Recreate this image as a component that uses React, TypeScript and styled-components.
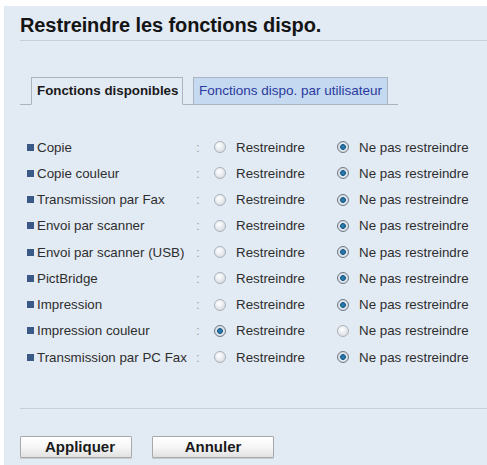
import React from "react";
import styled, { createGlobalStyle } from "styled-components";

const GlobalStyle = createGlobalStyle`
  html, body { margin: 0; padding: 0; background: #ffffff; }
  body { font-family: "Liberation Sans", Arial, sans-serif; }
  * { box-sizing: border-box; }
`;

const Panel = styled.div`
  margin: 6px 0 0 4px;
  min-height: 459px;
  background: #e2eaf4;
  padding: 0 0 0 16px;
  overflow: hidden;
`;

const Title = styled.h1`
  margin: 0;
  padding: 7px 0 3px;
  font-size: 20px;
  line-height: 24px;
  font-weight: bold;
  color: #141414;
  border-bottom: 1px solid #c7ced7;
  letter-spacing: -0.1px;
`;

const TabBar = styled.div`
  margin-top: 36px;
  width: 378px;
  display: flex;
  align-items: flex-end;
  padding-left: 11px;
  border-bottom: 1px solid #a9b4c0;
`;

const Tab = styled.div<{ $active?: boolean }>`
  height: 28px;
  margin-bottom: -1px;
  margin-left: ${(p) => (p.$active ? "0" : "10px")};
  width: ${(p) => (p.$active ? "152px" : "195px")};
  border: 1px solid #a9b4c0;
  border-bottom: 1px solid ${(p) => (p.$active ? "#e2eaf4" : "#a9b4c0")};
  background: ${(p) => (p.$active ? "#e2eaf4" : "#c5d9f0")};
  font-size: ${(p) => (p.$active ? "13.33px" : "13.5px")};
  font-weight: ${(p) => (p.$active ? "bold" : "normal")};
  color: ${(p) => (p.$active ? "#1a1a1a" : "#2b3a9e")};
  line-height: 26px;
  padding-left: 5px;
  white-space: nowrap;
`;

const RowList = styled.div`
  margin-top: 29px;
  display: flex;
  flex-direction: column;
`;

const Row = styled.div`
  height: 26.25px;
  display: grid;
  grid-template-columns: 175px 18px 123px auto;
  align-items: center;
  font-size: 13.33px;
  color: #2e2e2e;
  white-space: nowrap;
`;

const Label = styled.div`
  display: flex;
  align-items: center;
  gap: 3px;
  padding-left: 7px;
`;

const Bullet = styled.span`
  width: 7px;
  height: 7px;
  background: #3b5986;
  flex: none;
`;

const Colon = styled.span`
  padding-left: 1px;
  color: #9aa3ad;
`;

const Option = styled.label`
  display: inline-flex;
  align-items: center;
  gap: 10px;
`;

const Radio = styled.span<{ $checked?: boolean }>`
  margin-left: 1px;
  width: 12px;
  height: 12px;
  border-radius: 50%;
  flex: none;
  border: 1px solid ${(p) => (p.$checked ? "#6c7a88" : "#abb1b8")};
  background: ${(p) =>
    p.$checked
      ? "radial-gradient(circle at 50% 50%, #2f86b8 0, #1c5f8c 2.6px, #e4e8ec 3.2px, #c9ced4 100%)"
      : "radial-gradient(circle at 40% 35%, #ffffff 0, #eceef1 40%, #cdd2d8 100%)"};
`;

const Separator = styled.div`
  margin-top: 38px;
  border-top: 1px solid #c7ced7;
`;

const Buttons = styled.div`
  margin-top: 27px;
  display: flex;
  gap: 20px;
`;

const Button = styled.button<{ $w: number; $pad?: number }>`
  width: ${(p) => p.$w}px;
  height: 22px;
  padding: 0 0 0 ${(p) => p.$pad ?? 0}px;
  border: 1px solid #a7a9ac;
  border-radius: 1px;
  background: linear-gradient(#ffffff 0%, #f6f6f6 50%, #e1e1e1 100%);
  box-shadow: 0 1px 0 #c9cdd2;
  font-family: "Liberation Sans", Arial, sans-serif;
  font-size: 15px;
  font-weight: bold;
  color: #1a1a1a;
  line-height: 20px;
`;

const rows: [string, boolean][] = [
  ["Copie", false],
  ["Copie couleur", false],
  ["Transmission par Fax", false],
  ["Envoi par scanner", false],
  ["Envoi par scanner (USB)", false],
  ["PictBridge", false],
  ["Impression", false],
  ["Impression couleur", true],
  ["Transmission par PC Fax", false],
];

export default function App() {
  return (
    <>
      <GlobalStyle />
      <Panel>
        <Title>Restreindre les fonctions dispo.</Title>
        <TabBar>
          <Tab $active>Fonctions disponibles</Tab>
          <Tab>Fonctions dispo. par utilisateur</Tab>
        </TabBar>
        <RowList>
          {rows.map(([name, restricted]) => (
            <Row key={name}>
              <Label>
                <Bullet />
                {name}
              </Label>
              <Colon>:</Colon>
              <Option>
                <Radio $checked={restricted} />
                Restreindre
              </Option>
              <Option>
                <Radio $checked={!restricted} />
                Ne pas restreindre
              </Option>
            </Row>
          ))}
        </RowList>
        <Separator />
        <Buttons>
          <Button $w={112} $pad={8}>Appliquer</Button>
          <Button $w={122}>Annuler</Button>
        </Buttons>
      </Panel>
    </>
  );
}
